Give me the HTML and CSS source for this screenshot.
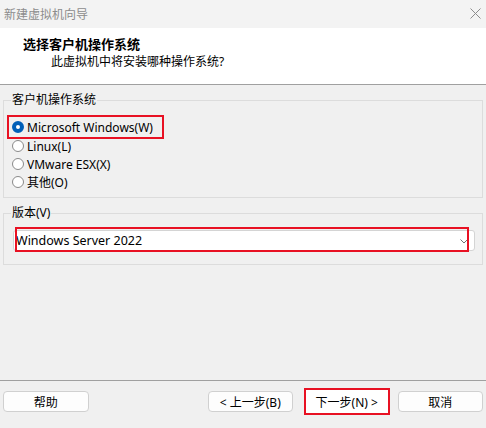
FILE: index.html
```html
<!DOCTYPE html>
<html lang="zh-CN">
<head>
    <meta charset="UTF-8">
    <title>新建虚拟机向导</title>
    <link rel="stylesheet" href="styles.css">
</head>
<body>

<div id="wizard">
    <div id="titlebar">
        <span class="title-text">新建虚拟机向导</span>
        <svg class="close-icon" width="11" height="11" viewBox="0 0 11 11">
            <path d="M0.5 0.5 L10.5 10.5 M10.5 0.5 L0.5 10.5" stroke="#8c8c8c" stroke-width="1" fill="none"/>
        </svg>
    </div>

    <div id="header">
        <div class="heading">选择客户机操作系统</div>
        <div class="subheading">此虚拟机中将安装哪种操作系统?</div>
    </div>

    <div id="content">
        <fieldset class="group group-os">
            <legend>客户机操作系统</legend>
            <div class="os-row marked"><span class="radio checked"></span><span>Microsoft Windows(W)</span></div>
            <div class="os-row"><span class="radio"></span><span>Linux(L)</span></div>
            <div class="os-row"><span class="radio"></span><span>VMware ESX(X)</span></div>
            <div class="os-row"><span class="radio"></span><span>其他(O)</span></div>
        </fieldset>

        <fieldset class="group group-version">
            <legend>版本(V)</legend>
            <div class="combo">
                <span class="combo-text">Windows Server 2022</span>
                <svg class="chevron" width="8" height="5" viewBox="0 0 8 5">
                    <path d="M0.5 0.5 L4 4 L7.5 0.5" stroke="#707070" stroke-width="1" fill="none"/>
                </svg>
                <span class="combo-mark"></span>
            </div>
        </fieldset>
    </div>

    <div id="footer">
        <button class="btn btn-help">帮助</button>
        <button class="btn btn-back">&lt; 上一步(B)</button>
        <button class="btn btn-next">下一步(N) &gt;</button>
        <button class="btn btn-cancel">取消</button>
    </div>
</div>

</body>
</html>
```

FILE: styles.css
```css
body {
    margin: 0;
    font-family: "Noto Sans", "Noto Sans CJK SC", sans-serif;
    font-size: 12px;
    color: #000;
    background: #f0f0f0;
}
#wizard {
    width: 486px;
    height: 428px;
    display: flex;
    flex-direction: column;
    overflow: hidden;
}
#titlebar {
    height: 28px;
    background: #f3f3f3;
    display: flex;
    align-items: center;
    justify-content: space-between;
    padding: 0 5px 0 4px;
}
.title-text {
    color: #8c8c8c;
    font-size: 12px;
}
.close-icon {
    margin-top: -1px;
}
#header {
    height: 56px;
    background: #fff;
    border-bottom: 1px solid #a0a0a0;
}
.heading {
    font-weight: bold;
    font-size: 13px;
    line-height: 18px;
    padding: 7px 0 0 23px;
}
.subheading {
    line-height: 18px;
    padding-left: 51px;
}
#content {
    flex: 1;
    padding: 0 3px 0 3px;
}
.group {
    margin: 7px 0 0 0;
    border: 1px solid #dcdcdc;
    padding: 0 7px 6px 7px;
}
.group legend {
    padding: 0 1px;
    line-height: 16px;
    height: 16px;
}
.group-os {
    padding-top: 10px;
}
.os-row {
    height: 18px;
    display: flex;
    align-items: center;
    gap: 3px;
}
.os-row.marked {
    display: inline-flex;
    padding-right: 8px;
    outline: 2px solid #e81123;
    outline-offset: 1px;
    margin-left: -1px;
    padding-left: 1px;
    width: 142px;
}
.radio {
    width: 10px;
    height: 10px;
    border: 1px solid #8a8a8a;
    border-radius: 50%;
    background: #fff;
    margin-left: 1px;
    box-sizing: content-box;
}
.radio.checked {
    width: 4px;
    height: 4px;
    border: 4px solid #005fb8;
    background: #fff;
}
.group-version {
    padding-top: 9px;
    padding-bottom: 13px;
}
.combo {
    position: relative;
    height: 19px;
    margin-left: 2px;
    background: #fff;
    border: 1px solid #d4d4d4;
    border-radius: 3px;
    display: flex;
    align-items: center;
    justify-content: space-between;
    padding: 0 6px 0 2px;
}
.combo-text {
    font-size: 12.5px;
}
.chevron {
    margin-top: 2px;
}
.combo-mark {
    position: absolute;
    left: 1px;
    top: -4px;
    right: 5px;
    height: 21px;
    border: 2px solid #e81123;
}
#footer {
    height: 37px;
    border-top: 1px solid #a0a0a0;
    display: flex;
    align-items: flex-start;
    padding: 10px 3px 0 3px;
}
.btn {
    width: 86px;
    height: 21px;
    background: #fdfdfd;
    border: 1px solid #d0d0d0;
    border-radius: 4px;
    font-family: inherit;
    font-size: 12px;
    color: #000;
    padding: 0;
}
.btn-back {
    margin-left: 119px;
}
.btn-next {
    width: 86px;
    height: 27px;
    margin: -3px 0 0 11px;
    border: 2px solid #e81123;
    border-radius: 0;
    background: #fff;
}
.btn-cancel {
    margin-left: 8px;
}
```
